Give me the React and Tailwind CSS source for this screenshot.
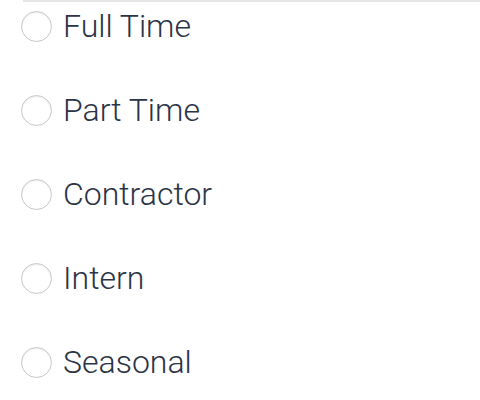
import React from 'react';

const options = ['Full Time', 'Part Time', 'Contractor', 'Intern', 'Seasonal'];

export default function App() {
  return (
    <div className="w-[480px] h-[400px] bg-white overflow-hidden" style={{ fontFamily: 'Roboto, sans-serif' }}>
      <div className="ml-[23px] border-t-2 border-[#e6e6e6]">
        <div className="flex flex-col gap-[36px] -ml-[2px]">
          {options.map((opt) => (
            <label key={opt} className="flex items-center h-[48px] gap-[11px] cursor-pointer">
              <span className="w-[31px] h-[31px] rounded-full border border-[#c8c8c8] bg-white shadow-[inset_0_1px_2px_rgba(0,0,0,0.08)] shrink-0" />
              <span className="text-[32px] font-light text-[#2b3446] leading-none">{opt}</span>
            </label>
          ))}
        </div>
      </div>
    </div>
  );
}
